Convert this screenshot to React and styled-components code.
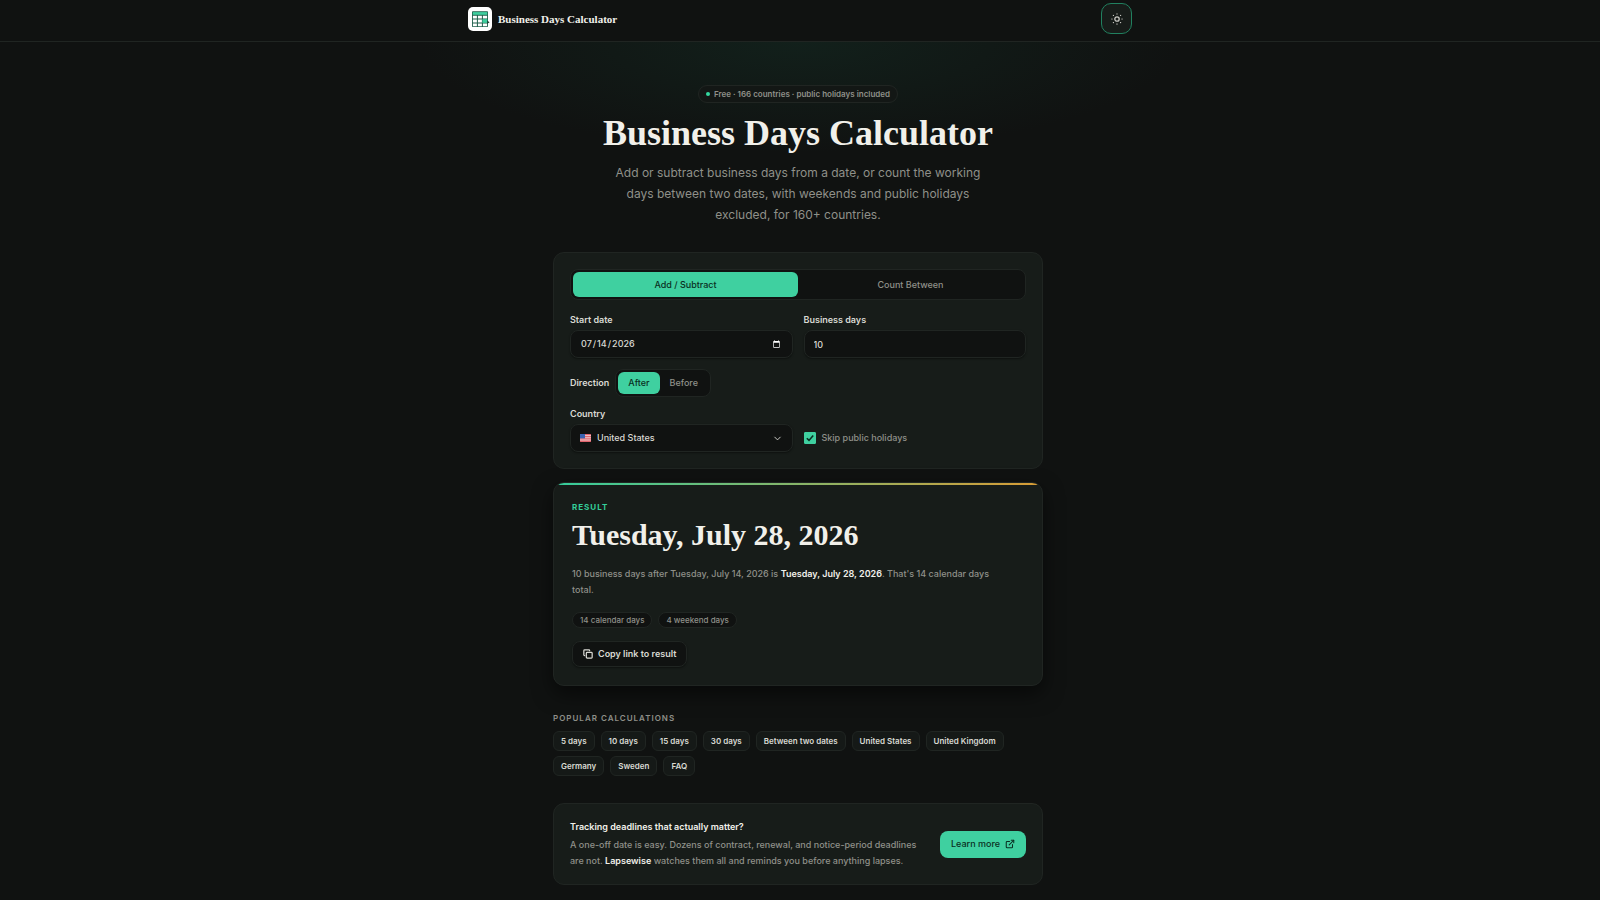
import React, { useState } from "react";
import styled, { createGlobalStyle, css } from "styled-components";
import { ChevronDown, Copy, ExternalLink } from "lucide-react";

const color = {
  page: "#101211",
  card: "#171c19",
  field: "#101211",
  line: "#202522",
  text: "#f1f0ea",
  soft: "#d9d9d3",
  muted: "#8f9089",
  accent: "#3fd0a0",
  accentInk: "#0a2f22",
};

const serif = '"Liberation Serif", serif';

const GlobalStyle = createGlobalStyle`
  *, *::before, *::after { box-sizing: border-box; }
  body {
    margin: 0;
    background: ${color.page};
    color: ${color.text};
    color-scheme: dark;
    font-family: Inter, "Liberation Sans", sans-serif;
    font-size: 9px;
    font-weight: 500;
    line-height: 16px;
  }
  button, input, select { font: inherit; color: inherit; }
  h1, h2, p, ul { margin: 0; padding: 0; }
`;

const Page = styled.div`
  min-height: 100vh;
  padding-bottom: 14px;
  background: radial-gradient(ellipse 380px 110px at 50% 42px, #12201b 0%, transparent 100%);
`;

const Header = styled.header`
  background: ${color.page};
  border-bottom: 1px solid ${color.line};
`;

const HeaderInner = styled.div`
  display: flex;
  align-items: center;
  justify-content: space-between;
  max-width: 696px;
  margin: 0 auto;
  padding: 3px 16px 7px;
`;

const Brand = styled.a`
  display: flex;
  align-items: center;
  gap: 6px;
  color: ${color.text};
  font: 700 11px/16px ${serif};
  text-decoration: none;
`;

const ThemeButton = styled.button`
  display: grid;
  place-items: center;
  width: 31px;
  height: 31px;
  padding: 0;
  border: 1px solid #21805f;
  border-radius: 10px;
  background: ${color.card};
  color: #c8c8c2;
`;

const Main = styled.main`
  max-width: 494px;
  margin: 0 auto;
  padding-right: 4px;
`;

const Hero = styled.section`
  display: flex;
  flex-direction: column;
  align-items: center;
  padding: 43px 0 27px;
  text-align: center;
`;

const Badge = styled.p`
  display: flex;
  align-items: center;
  gap: 4px;
  height: 18px;
  padding: 0 7px;
  border: 1px solid ${color.line};
  border-radius: 9px;
  background: #131715;
  color: ${color.muted};
  font-size: 8px;
  font-weight: 600;
`;

const Dot = styled.span`
  width: 4px;
  height: 4px;
  border-radius: 50%;
  background: #34d8a0;
`;

const Title = styled.h1`
  margin-top: 10px;
  font: 700 36px/40px ${serif};
`;

const Lead = styled.p`
  max-width: 384px;
  margin-top: 9px;
  color: ${color.muted};
  font-size: 12px;
  font-weight: 400;
  line-height: 21px;
`;

const Card = styled.section`
  padding: 16px;
  border: 1px solid ${color.line};
  border-radius: 11px;
  background: ${color.card};
`;

const segment = css`
  display: flex;
  padding: 2px;
  border: 1px solid ${color.line};
  border-radius: 8px;
  background: ${color.field};
`;

const Tabs = styled.div`
  ${segment}
`;

const Segment = styled.div`
  ${segment}
`;

const Tab = styled.button`
  flex: 1;
  height: 25px;
  padding: 0 10px;
  border: 0;
  border-radius: 6px;
  background: ${(p) => (p.$active ? color.accent : "transparent")};
  color: ${(p) => (p.$active ? color.accentInk : color.muted)};
  font-weight: 500;
`;

const SmallTab = styled(Tab)`
  flex: none;
  height: 22px;
`;

const Fields = styled.div`
  display: grid;
  grid-template-columns: 1fr 1fr;
  align-items: end;
  gap: 11px;
  margin-top: ${(p) => (p.$tight ? 9 : 12)}px;
`;

const Field = styled.div`
  display: flex;
  flex-direction: column;
  gap: 2px;
`;

const Label = styled.label`
  color: ${color.soft};
  font-weight: 600;
`;

const fieldBox = css`
  width: 100%;
  height: 28px;
  padding: 0 9px;
  border: 1px solid ${color.line};
  border-radius: 8px;
  background: ${color.field};
  color: ${color.soft};
  box-shadow: 0 1px 2px #0006;
`;

const Input = styled.input`
  ${fieldBox}
`;

const DirectionRow = styled.div`
  display: flex;
  align-items: center;
  gap: 6px;
  margin-top: 11px;
  color: ${color.soft};
  font-weight: 600;
`;

const SelectBox = styled.div`
  ${fieldBox}
  display: flex;
  align-items: center;
  gap: 6px;
`;

const Select = styled.select`
  flex: 1;
  padding: 0;
  border: 0;
  outline: 0;
  appearance: none;
  background: transparent;
`;

const Check = styled.label`
  display: flex;
  align-items: center;
  gap: 6px;
  height: 28px;
  color: ${color.muted};
`;

const CheckMark = styled.span`
  display: grid;
  width: 12px;
  height: 12px;

  > * { grid-area: 1 / 1; }
  > svg { pointer-events: none; }
`;

const CheckInput = styled.input`
  width: 12px;
  height: 12px;
  margin: 0;
  appearance: none;
  border: 1px solid ${color.accent};
  border-radius: 1px;

  &:checked { background: ${color.accent}; }
`;

const ResultCard = styled(Card)`
  position: relative;
  margin-top: 13px;
  padding: 16px 18px 18px;
  overflow: hidden;
  box-shadow: 0 8px 20px #0008;

  &::before {
    content: "";
    position: absolute;
    inset: 0 0 auto;
    height: 2px;
    background: linear-gradient(90deg, #35cd9c, #d99c35);
  }
`;

const Eyebrow = styled.p`
  color: #34cf9b;
  font-size: 8px;
  font-weight: 700;
  letter-spacing: 1px;
  text-transform: uppercase;
`;

const ResultDate = styled.h2`
  margin-top: 4px;
  font: 700 30px/32px ${serif};
`;

const ResultText = styled.p`
  max-width: 432px;
  margin-top: 15px;
  color: ${color.muted};

  strong { color: ${color.text}; font-weight: 600; }
`;

const Stats = styled.ul`
  display: flex;
  gap: 6px;
  margin-top: 14px;
  list-style: none;
`;

const Stat = styled.li`
  height: 16px;
  padding: 0 7px;
  border: 1px solid ${color.line};
  border-radius: 8px;
  background: ${color.field};
  color: ${color.muted};
  font-size: 8px;
  line-height: 14px;
`;

const CopyButton = styled.button`
  display: flex;
  align-items: center;
  gap: 5px;
  height: 26px;
  margin-top: 13px;
  padding: 0 10px;
  border: 1px solid ${color.line};
  border-radius: 8px;
  background: ${color.field};
  color: ${color.soft};
  font-weight: 600;
  box-shadow: 0 1px 2px #0006;
`;

const Popular = styled.nav`
  margin-top: 24px;
`;

const PopularTitle = styled.h2`
  color: ${color.muted};
  font-size: 8px;
  font-weight: 600;
  letter-spacing: 1px;
  line-height: 16px;
  text-transform: uppercase;
`;

const Links = styled.div`
  display: flex;
  flex-wrap: wrap;
  gap: 5px 6px;
  margin-top: 5px;
`;

const Chip = styled.a`
  height: 20px;
  padding: 0 7px;
  border: 1px solid ${color.line};
  border-radius: 6px;
  background: #151917;
  color: ${color.soft};
  font-size: 8px;
  font-weight: 600;
  line-height: 18px;
  text-decoration: none;
`;

const Promo = styled(Card)`
  display: flex;
  align-items: center;
  justify-content: space-between;
  gap: 14px;
  margin-top: 27px;
  padding: 15px 16px;
`;

const PromoTitle = styled.h2`
  font-size: 9px;
  font-weight: 600;
  line-height: 16px;
`;

const PromoText = styled.p`
  margin-top: 2px;
  color: ${color.muted};

  strong { color: ${color.text}; font-weight: 600; }
`;

const PromoLink = styled.a`
  display: flex;
  flex: none;
  align-items: center;
  gap: 5px;
  height: 27px;
  padding: 0 11px;
  border-radius: 8px;
  background: ${color.accent};
  color: ${color.accentInk};
  text-decoration: none;
`;

const Logo = () => (
  <svg width="24" height="24" viewBox="0 0 24 24" aria-hidden="true">
    <rect width="24" height="24" rx="5" fill="#fff" />
    <rect x="4" y="4.3" width="16" height="15.7" rx=".8" fill="#1f5f4b" />
    <rect x="4.8" y="5.1" width="14.4" height="2.7" fill="#3fcf9f" />
    <g fill="#fff">
      <path d="M4.9 8.8h4v2.8h-4zM9.9 8.8h4v2.8h-4zM14.9 8.8h4.2v2.8h-4.2z" />
      <path d="M4.9 12.6h4v2.8h-4zM9.9 12.6h4v2.8h-4z" />
      <path d="M4.9 16.4h4v2.8h-4zM9.9 16.4h4v2.8h-4zM14.9 16.4h4.2v2.8h-4.2z" />
    </g>
    <path d="M14.4 12.1h4.8v3.8h-4.8z" fill="#3fcf9f" />
    <path d="m19.3 13.7 2.3 1.5-2.3 1.5z" fill="#14382c" />
  </svg>
);

const SunIcon = () => (
  <svg width="12" height="12" viewBox="0 0 12 12" fill="none" stroke="currentColor" strokeLinecap="round" aria-hidden="true">
    <circle cx="6" cy="6" r="2.2" strokeWidth="1.3" />
    <path strokeWidth="1.1" d="M6 .8v.3M6 10.9v.3M.8 6h.3M10.9 6h.3M2.3 2.3l.2.2M9.5 9.5l.2.2M2.3 9.7l.2-.2M9.5 2.5l.2-.2" />
  </svg>
);

const Flag = () => (
  <svg width="11" height="8" viewBox="0 0 11 8" aria-hidden="true">
    <rect width="11" height="8" rx="1" fill="#f1d9d9" />
    <path d="M0 .6h11M0 2.4h11M0 4.2h11M0 6h11M0 7.6h11" stroke="#dd4a55" strokeWidth=".9" />
    <rect width="5" height="4.4" fill="#3a62b0" />
  </svg>
);

const popular = [
  "5 days", "10 days", "15 days", "30 days", "Between two dates",
  "United States", "United Kingdom", "Germany", "Sweden", "FAQ",
];

export default function App() {
  const [mode, setMode] = useState("add");
  const [direction, setDirection] = useState("after");

  return (
    <Page>
      <GlobalStyle />
      <Header>
        <HeaderInner>
          <Brand href="#"><Logo />Business Days Calculator</Brand>
          <ThemeButton type="button" aria-label="Switch theme"><SunIcon /></ThemeButton>
        </HeaderInner>
      </Header>
      <Main>
        <Hero>
          <Badge><Dot />Free · 166 countries · public holidays included</Badge>
          <Title>Business Days Calculator</Title>
          <Lead>
            Add or subtract business days from a date, or count the working days between two dates, with weekends and
            public holidays excluded, for 160+ countries.
          </Lead>
        </Hero>

        <Card>
          <Tabs>
            <Tab type="button" $active={mode === "add"} onClick={() => setMode("add")}>Add / Subtract</Tab>
            <Tab type="button" $active={mode === "count"} onClick={() => setMode("count")}>Count Between</Tab>
          </Tabs>
          <Fields>
            <Field>
              <Label htmlFor="start">Start date</Label>
              <Input id="start" type="date" defaultValue="2026-07-14" />
            </Field>
            <Field>
              <Label htmlFor="days">Business days</Label>
              <Input id="days" type="text" inputMode="numeric" defaultValue="10" />
            </Field>
          </Fields>
          <DirectionRow role="group" aria-labelledby="direction">
            <span id="direction">Direction</span>
            <Segment>
              <SmallTab type="button" $active={direction === "after"} onClick={() => setDirection("after")}>After</SmallTab>
              <SmallTab type="button" $active={direction === "before"} onClick={() => setDirection("before")}>Before</SmallTab>
            </Segment>
          </DirectionRow>
          <Fields $tight>
            <Field>
              <Label htmlFor="country">Country</Label>
              <SelectBox>
                <Flag />
                <Select id="country" defaultValue="us">
                  <option value="us">United States</option>
                </Select>
                <ChevronDown size={11} />
              </SelectBox>
            </Field>
            <Check>
              <CheckMark>
                <CheckInput type="checkbox" defaultChecked />
                <svg width="12" height="12" viewBox="0 0 12 12" fill="none" aria-hidden="true">
                  <path d="M2.8 6.2 5 8.4l4.2-5" stroke="#0a2f22" strokeWidth="1.6" />
                </svg>
              </CheckMark>
              Skip public holidays
            </Check>
          </Fields>
        </Card>

        <ResultCard>
          <Eyebrow>Result</Eyebrow>
          <ResultDate>Tuesday, July 28, 2026</ResultDate>
          <ResultText>
            10 business days after Tuesday, July 14, 2026 is <strong>Tuesday, July 28, 2026</strong>. That's 14 calendar
            days total.
          </ResultText>
          <Stats>
            <Stat>14 calendar days</Stat>
            <Stat>4 weekend days</Stat>
          </Stats>
          <CopyButton type="button"><Copy size={10} strokeWidth={3} />Copy link to result</CopyButton>
        </ResultCard>

        <Popular>
          <PopularTitle>Popular calculations</PopularTitle>
          <Links>
            {popular.map((name) => <Chip key={name} href="#">{name}</Chip>)}
          </Links>
        </Popular>

        <Promo>
          <div>
            <PromoTitle>Tracking deadlines that actually matter?</PromoTitle>
            <PromoText>
              A one-off date is easy. Dozens of contract, renewal, and notice-period deadlines are
              not. <strong>Lapsewise</strong> watches them all and reminds you before anything lapses.
            </PromoText>
          </div>
          <PromoLink href="#">Learn more<ExternalLink size={10} strokeWidth={2.5} /></PromoLink>
        </Promo>
      </Main>
    </Page>
  );
}
